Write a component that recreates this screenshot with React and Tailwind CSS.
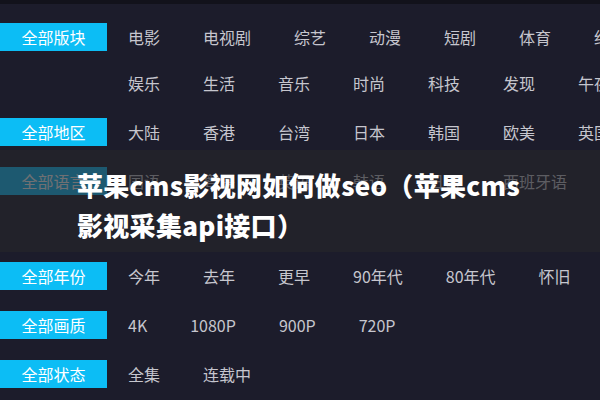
import React from "react";

const rows = [
  {
    label: "全部版块",
    lines: [
      ["电影", "电视剧", "综艺", "动漫", "短剧", "体育", "纪录片"],
      ["娱乐", "生活", "音乐", "时尚", "科技", "发现", "午夜"],
    ],
  },
  { label: "全部地区", lines: [["大陆", "香港", "台湾", "日本", "韩国", "欧美", "英国"]] },
  {
    label: "全部语言",
    lines: [["国语", "粤语", "英语", "韩语", "日语", "西班牙语"], []],
  },
  { label: "全部年份", lines: [["今年", "去年", "更早", "90年代", "80年代", "怀旧"]] },
  { label: "全部画质", lines: [["4K", "1080P", "900P", "720P"]] },
  { label: "全部状态", lines: [["全集", "连载中"]] },
];

export default function App() {
  return (
    <div
      className="relative w-[600px] h-[400px] overflow-hidden bg-[#1c1c2b]"
      style={{ fontFamily: '"Noto Sans CJK SC", "Noto Sans", sans-serif' }}
    >
      <div className="h-[4px] bg-[#12121b]" />
      <div className="flex flex-col gap-[21px] pt-[19px]">
        {rows.map((row) => (
          <div key={row.label} className="flex">
            <div className="w-[107px] h-[28px] shrink-0 bg-[#0cbdf5] text-white text-[16px] leading-[28px] text-center mr-[21px]">
              {row.label}
            </div>
            <div className="flex flex-col gap-[18px]">
              {row.lines.map((line, i) => (
                <div key={i} className="flex h-[28px] items-center whitespace-nowrap">
                  {line.map((it) => (
                    <span key={it} className="shrink-0 mr-[43px] text-[16px] leading-[28px] text-[#c6c6ce]">
                      {it}
                    </span>
                  ))}
                </div>
              ))}
            </div>
          </div>
        ))}
      </div>
      <div className="absolute left-0 top-[150px] w-[600px] h-[102px] bg-[rgba(38,38,42,0.66)] pt-[15px] pl-[77px]">
        <div className="text-white font-black text-[26px] leading-[40px] tracking-[0.3px] whitespace-nowrap">
          苹果cms影视网如何做seo（苹果cms
          <br />
          影视采集api接口）
        </div>
      </div>
    </div>
  );
}
